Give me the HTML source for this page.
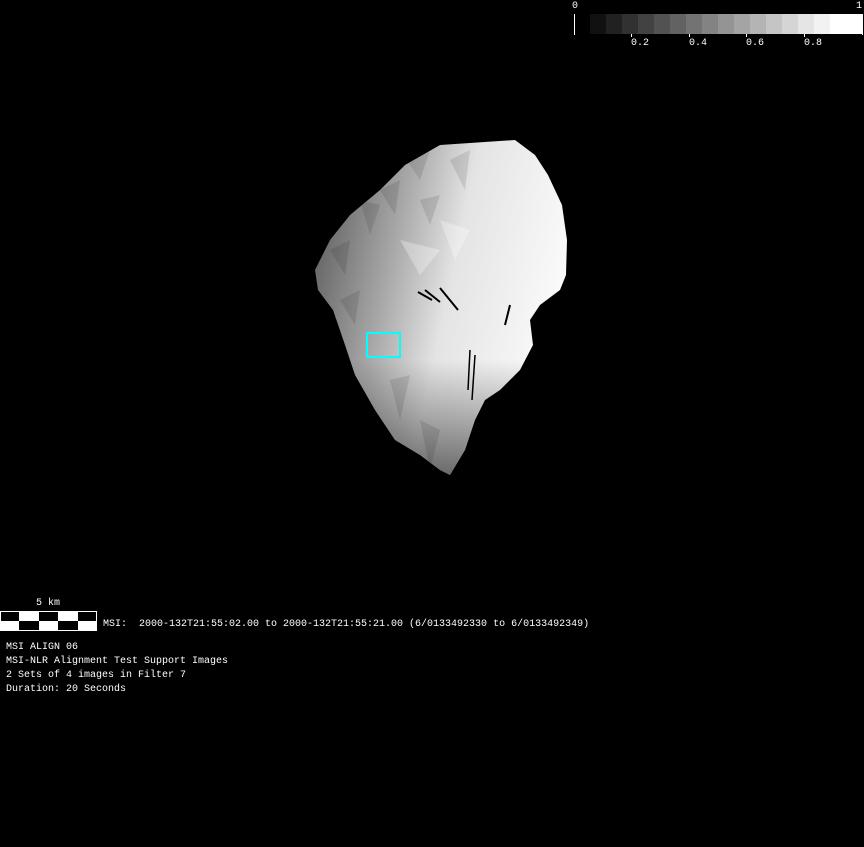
<!DOCTYPE html>
<html><head><style>
html,body{margin:0;padding:0;background:#000;width:864px;height:847px;overflow:hidden}
.t{position:absolute;color:#fff;font-family:"Liberation Mono",monospace;font-size:10px;line-height:10px;white-space:pre}
</style></head><body>
<svg width="864" height="847" style="position:absolute;left:0;top:0">
<defs>
<linearGradient id="g" gradientUnits="userSpaceOnUse" x1="320" y1="250" x2="560" y2="300">
<stop offset="0" stop-color="#6a6a6a"/>
<stop offset="0.3" stop-color="#aaa"/>
<stop offset="0.55" stop-color="#e4e4e4"/>
<stop offset="1" stop-color="#fafafa"/>
</linearGradient>
<linearGradient id="g2" gradientUnits="userSpaceOnUse" x1="0" y1="360" x2="0" y2="475">
<stop offset="0" stop-color="#000" stop-opacity="0"/>
<stop offset="1" stop-color="#000" stop-opacity="0.55"/>
</linearGradient>
<clipPath id="c"><polygon points="440,145 515,140 535,155 548,175 562,205 567,240 566,275 560,290 540,305 530,320 533,345 520,370 500,390 485,400 475,420 465,450 450,475 440,470 420,455 395,440 375,410 355,375 345,345 333,310 318,290 315,270 330,240 350,215 380,190 405,165"/></clipPath>
</defs>
<g clip-path="url(#c)">
<rect x="300" y="130" width="280" height="360" fill="url(#g)"/>
<rect x="300" y="130" width="280" height="360" fill="url(#g2)"/>
<g fill="#000" opacity="0.1">
<polygon points="400,150 430,150 420,180"/>
<polygon points="450,160 470,150 465,190"/>
<polygon points="380,190 400,180 395,215"/>
<polygon points="420,200 440,195 430,225"/>
<polygon points="330,250 350,240 345,275"/>
<polygon points="340,300 360,290 355,325"/>
<polygon points="360,200 380,205 370,235"/>
<polygon points="390,380 410,375 400,420"/>
<polygon points="420,420 440,430 430,470"/>
</g>
<g fill="#fff" opacity="0.3">
<polygon points="400,240 440,250 420,275"/>
<polygon points="440,220 470,230 455,260"/>
</g>
</g>
<path d="M418,292 L432,300 M425,290 L440,302 M440,288 L458,310" stroke="#000" stroke-width="2"/>
<path d="M470,350 L468,390 M475,355 L472,400" stroke="#000" stroke-width="1.5"/>
<path d="M510,305 L505,325" stroke="#000" stroke-width="2"/>
<rect x="367" y="333" width="33" height="24" fill="none" stroke="#0ff" stroke-width="2"/>
<g>
<rect x="590" y="14" width="16" height="20" fill="#111"/>
<rect x="606" y="14" width="16" height="20" fill="#212121"/>
<rect x="622" y="14" width="16" height="20" fill="#313131"/>
<rect x="638" y="14" width="16" height="20" fill="#424242"/>
<rect x="654" y="14" width="16" height="20" fill="#525252"/>
<rect x="670" y="14" width="16" height="20" fill="#626262"/>
<rect x="686" y="14" width="16" height="20" fill="#737373"/>
<rect x="702" y="14" width="16" height="20" fill="#838383"/>
<rect x="718" y="14" width="16" height="20" fill="#949494"/>
<rect x="734" y="14" width="16" height="20" fill="#a4a4a4"/>
<rect x="750" y="14" width="16" height="20" fill="#b4b4b4"/>
<rect x="766" y="14" width="16" height="20" fill="#c5c5c5"/>
<rect x="782" y="14" width="16" height="20" fill="#d5d5d5"/>
<rect x="798" y="14" width="16" height="20" fill="#e5e5e5"/>
<rect x="814" y="14" width="16" height="20" fill="#f2f2f2"/>
<rect x="830" y="14" width="32" height="20" fill="#fff"/>
</g>
<rect x="574" y="14" width="1" height="21" fill="#fff"/>
<rect x="862" y="14" width="1" height="21" fill="#fff"/>
<rect x="631" y="34" width="1" height="3" fill="#fff"/>
<rect x="689" y="34" width="1" height="3" fill="#fff"/>
<rect x="746" y="34" width="1" height="3" fill="#fff"/>
<rect x="804" y="34" width="1" height="3" fill="#fff"/>
<rect x="0" y="611" width="97" height="20" fill="#fff"/>
<rect x="1" y="612" width="18" height="9" fill="#000"/>
<rect x="39" y="612" width="19" height="9" fill="#000"/>
<rect x="78" y="612" width="18" height="9" fill="#000"/>
<rect x="19" y="621" width="20" height="9" fill="#000"/>
<rect x="58" y="621" width="20" height="9" fill="#000"/>
</svg>
<div class="t" style="left:572px;top:2px">0</div>
<div class="t" style="left:856px;top:2px">1</div>
<div class="t" style="left:631px;top:39px">0.2</div>
<div class="t" style="left:689px;top:39px">0.4</div>
<div class="t" style="left:746px;top:39px">0.6</div>
<div class="t" style="left:804px;top:39px">0.8</div>
<div class="t" style="left:36px;top:599px">5 km</div>
<div class="t" style="left:103px;top:620px">MSI:  2000-132T21:55:02.00 to 2000-132T21:55:21.00 (6/0133492330 to 6/0133492349)</div>
<div class="t" style="left:6px;top:643px">MSI ALIGN 06</div>
<div class="t" style="left:6px;top:657px">MSI-NLR Alignment Test Support Images</div>
<div class="t" style="left:6px;top:671px">2 Sets of 4 images in Filter 7</div>
<div class="t" style="left:6px;top:685px">Duration: 20 Seconds</div>
</body></html>
